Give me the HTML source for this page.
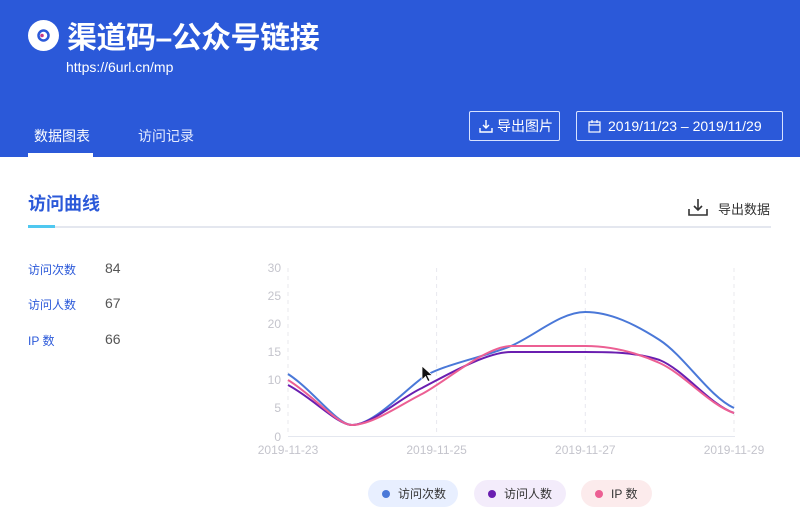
<!DOCTYPE html>
<html><head><meta charset="utf-8"><style>
*{margin:0;padding:0;box-sizing:border-box}
body{width:800px;height:527px;overflow:hidden;background:#fff;font-family:"Liberation Sans","Noto Sans CJK SC",sans-serif;position:relative}
.hd{position:absolute;left:0;top:0;width:800px;height:157px;background:#2b59d9}
.a{position:absolute;white-space:nowrap}
.btn{position:absolute;border:1px solid #d8e2ff;border-radius:2px;color:#fff;font-size:14px;display:flex;align-items:center}
.pill{position:absolute;top:480px;height:27px;border-radius:14px;font-size:12px;color:#333;display:flex;align-items:center;padding-left:14px}
.pill i{width:8px;height:8px;border-radius:50%;display:inline-block;margin-right:8px}
</style></head><body>
<div class="hd"></div>
<svg class="a" style="left:28px;top:20px" width="31" height="31"><circle cx="15.5" cy="15.5" r="15.5" fill="#fff"/><circle cx="15.5" cy="15.5" r="5" fill="none" stroke="#2b59d9" stroke-width="2.5"/><circle cx="14" cy="15.5" r="1.8" fill="#c33a8a"/></svg>
<div class="a" style="left:67px;top:13px;font-size:30px;font-weight:bold;color:#fff;letter-spacing:-0.5px">渠道码–公众号链接</div>
<div class="a" style="left:66px;top:59px;font-size:14px;color:#fff">https://6url.cn/mp</div>
<div class="a" style="left:34px;top:126px;font-size:14px;color:#fff">数据图表</div>
<div class="a" style="left:28px;top:153px;width:65px;height:4px;background:#fff"></div>
<div class="a" style="left:138px;top:126px;font-size:14px;color:#e6ecff">访问记录</div>
<div class="btn" style="left:469px;top:111px;width:91px;height:30px;padding-left:9px">
<svg width="14" height="14" viewBox="0 0 14 14" style="margin-right:4px"><path d="M7 1v8M4 6l3 3 3-3M1 9v4h12V9" fill="none" stroke="#fff" stroke-width="1.4"/></svg>导出图片</div>
<div class="btn" style="left:576px;top:111px;width:207px;height:30px;padding-left:11px">
<svg width="13" height="13" viewBox="0 0 13 13" style="margin-right:7px"><rect x="1" y="2" width="11" height="10" fill="none" stroke="#fff" stroke-width="1.2"/><path d="M1 5h11M4 0v3M9 0v3" stroke="#fff" stroke-width="1.2"/></svg>2019/11/23 – 2019/11/29</div>

<div class="a" style="left:28px;top:190px;font-size:18px;color:#2b59d9;font-weight:bold">访问曲线</div>
<div class="a" style="left:28px;top:226px;width:743px;height:2px;background:#e4e7ef"></div>
<div class="a" style="left:28px;top:225px;width:27px;height:3px;background:#4fc8f0"></div>
<svg class="a" style="left:688px;top:198px" width="20" height="18" viewBox="0 0 20 18"><path d="M10 1v11M6 8l4 4 4-4M1 11v6h18v-6" fill="none" stroke="#333" stroke-width="1.6"/></svg>
<div class="a" style="left:718px;top:199px;font-size:13px;color:#333">导出数据</div>

<div class="a" style="left:28px;top:261px;font-size:12px;color:#2b59d9">访问次数</div>
<div class="a" style="left:105px;top:260px;font-size:14px;color:#555">84</div>
<div class="a" style="left:28px;top:296px;font-size:12px;color:#2b59d9">访问人数</div>
<div class="a" style="left:105px;top:295px;font-size:14px;color:#555">67</div>
<div class="a" style="left:28px;top:332px;font-size:12px;color:#2b59d9">IP 数</div>
<div class="a" style="left:105px;top:331px;font-size:14px;color:#555">66</div>

<svg class="a" style="left:0;top:0" width="800" height="527">
<g stroke="#e8e8ee" stroke-dasharray="4 4"><path d="M288 268V436M436.6 268V436M585.3 268V436M734 268V436"/></g>
<path d="M288 436.5H735" stroke="#e4e7ef"/>
<g font-size="12" fill="#c4c4cc" font-family="Liberation Sans,sans-serif" text-anchor="end">
<text x="281" y="272">30</text><text x="281" y="300">25</text><text x="281" y="328">20</text><text x="281" y="356">15</text><text x="281" y="384">10</text><text x="281" y="412">5</text><text x="281" y="441">0</text></g>
<g font-size="12" fill="#c4c4cc" font-family="Liberation Sans,sans-serif" text-anchor="middle">
<text x="288" y="454">2019-11-23</text><text x="436.6" y="454">2019-11-25</text><text x="585.3" y="454">2019-11-27</text><text x="734" y="454">2019-11-29</text></g>
<g fill="none" stroke-width="2">
<path stroke="#4a78d8" d="M288 374C312.8 390 337.5 425 352 425C372 425 400 395 422 378C440 365 486.2 356.8 511 346C535.8 335.2 560.5 312 585.3 312C610 312 634.8 324 659.6 340C684.4 356 709.2 396.7 734 408"/>
<path stroke="#6a1eb0" d="M288 385C312.8 398 337.5 425 352 425C372 425 400 398 422 388C445 376 486.2 352 511 352C535.8 352 560.5 352 585.3 352C610 352 634.8 352 659.6 360C684.4 370.2 709.2 404.2 734 413"/>
<path stroke="#ec5f93" d="M288 380C312.8 395 337.5 425 352 425C372 425 400 405 422 394C445 382 486.2 346 511 346C535.8 346 560.5 346 585.3 346C610 346 634.8 351.8 659.6 363C684.4 374.2 709.2 404.7 734 413"/>
</g>
<path d="M422 366v14l3.5-3.5 2.5 5 2-1-2.5-5h5z" fill="#111" stroke="#fff" stroke-width=".8"/>
</svg>

<div class="pill" style="left:368px;width:90px;background:#e8efff"><i style="background:#4a78d8"></i>访问次数</div>
<div class="pill" style="left:474px;width:92px;background:#f3ecfb"><i style="background:#6a1eb0"></i>访问人数</div>
<div class="pill" style="left:581px;width:71px;background:#fcebec"><i style="background:#ec5f93"></i>IP 数</div>
</body></html>
